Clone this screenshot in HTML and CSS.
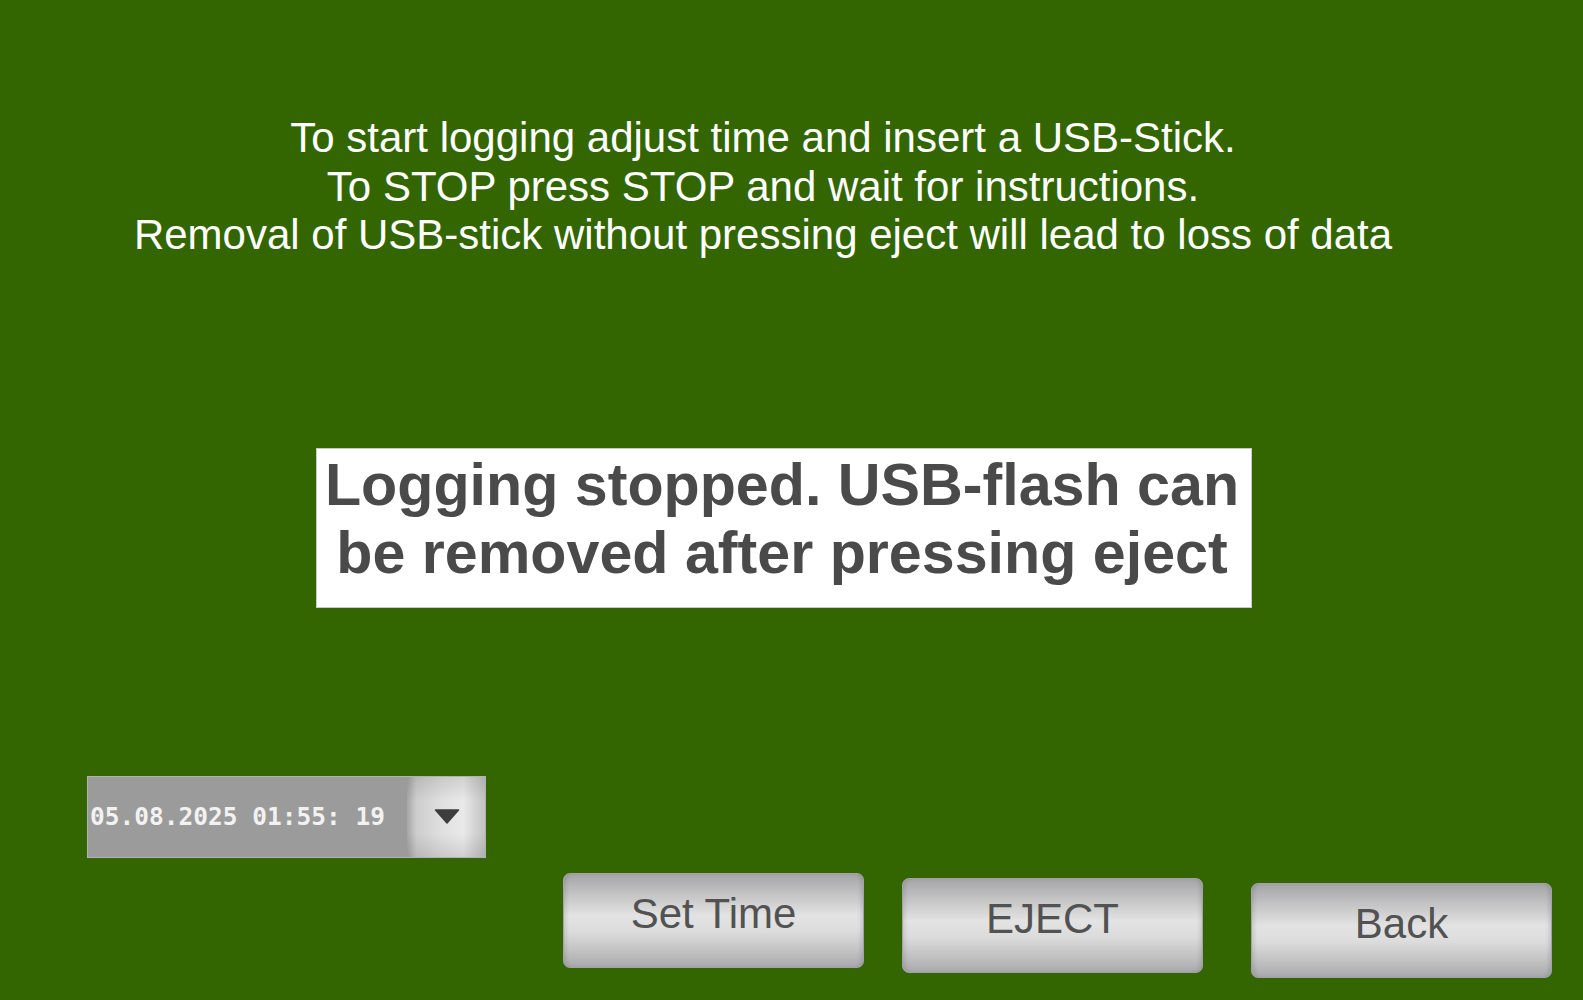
FILE: index.html
```html
<!DOCTYPE html>
<html lang="en">
<head>
<meta charset="utf-8">
<title>USB Logging</title>
<link rel="stylesheet" href="styles.css">
</head>
<body>
<div class="page">
  <div class="instructions">
    <div>To start logging adjust time and insert a USB-Stick.</div>
    <div>To STOP press STOP and wait for instructions.</div>
    <div>Removal of USB-stick without pressing eject will lead to loss of data</div>
  </div>

  <div class="message">Logging stopped. USB-flash can<br>be removed after pressing eject</div>

  <div class="datetime">
    <div class="datetime-value">05.08.2025 01:55: 19</div>
    <div class="datetime-btn">
      <svg width="26" height="15" viewBox="0 0 26 15"><path d="M1.5 1 L24.5 1 L13 14 Z" fill="#3d3d3d" stroke="#3d3d3d" stroke-width="1.5" stroke-linejoin="round"/></svg>
    </div>
  </div>

  <div class="actions">
    <div class="btn btn-set">Set Time</div>
    <div class="btn btn-eject">EJECT</div>
    <div class="btn btn-back">Back</div>
  </div>
</div>
</body>
</html>
```

FILE: styles.css
```css
html, body {
  margin: 0;
  padding: 0;
}

body {
  background: #336600;
  font-family: "Liberation Sans", Arial, sans-serif;
}

.page {
  width: 1583px;
  height: 1000px;
  overflow: hidden;
  display: flex;
  flex-direction: column;
}

.instructions {
  margin-top: 114px;
  width: 1526px;
  text-align: center;
  color: #ffffff;
  font-size: 42px;
  line-height: 48.5px;
}

.message {
  margin-top: 188px;
  margin-left: 316px;
  width: 936px;
  height: 160px;
  box-sizing: border-box;
  background: #ffffff;
  border: 1px solid #c9c9c9;
  padding-top: 2px;
  padding-right: 4px;
  text-align: center;
  color: #4a4a4a;
  font-weight: bold;
  font-size: 59.2px;
  line-height: 68px;
}

.datetime {
  margin-top: 168px;
  margin-left: 87px;
  width: 399px;
  height: 82px;
  box-sizing: border-box;
  border: 1px solid #b2b2b2;
  display: flex;
  background: #9b9b9b;
}

.datetime-value {
  width: 319px;
  box-sizing: border-box;
  padding-left: 2px;
  display: flex;
  align-items: center;
  white-space: pre;
  color: #f2f2f2;
  font-family: "DejaVu Sans Mono", "Liberation Mono", monospace;
  font-weight: bold;
  font-size: 24.5px;
  letter-spacing: 0;
}

.datetime-btn {
  flex: 1;
  display: flex;
  align-items: center;
  justify-content: center;
  padding-left: 2px;
  background:
    linear-gradient(to bottom, rgba(0,0,0,0.10) 0%, rgba(0,0,0,0) 30%, rgba(0,0,0,0) 70%, rgba(0,0,0,0.10) 100%),
    linear-gradient(to right, #a6a6a6 0%, #cdcdcd 12%, #e0e0e0 45%, #e9e9e9 72%, #c2c2c2 100%);
}

.actions {
  margin-top: 15px;
  display: flex;
  align-items: flex-start;
}

.btn {
  width: 301px;
  height: 95px;
  box-sizing: border-box;
  border: 1px solid #a3a2a8;
  border-radius: 7px;
  display: flex;
  align-items: center;
  justify-content: center;
  padding-bottom: 12px;
  color: #525252;
  font-size: 42px;
  background: linear-gradient(to bottom, #a5a5a8 0%, #c4c4c5 22%, #e3e3e3 45%, #dcdcdc 62%, #c3c3c3 82%, #aaaaad 100%);
  box-shadow: inset 4px 0 4px -2px rgba(0,0,0,0.12), inset -4px 0 4px -2px rgba(0,0,0,0.12);
}

.btn-set {
  margin-left: 563px;
}

.btn-eject {
  margin-left: 38px;
  margin-top: 5px;
}

.btn-back {
  margin-left: 48px;
  margin-top: 10px;
}
```
